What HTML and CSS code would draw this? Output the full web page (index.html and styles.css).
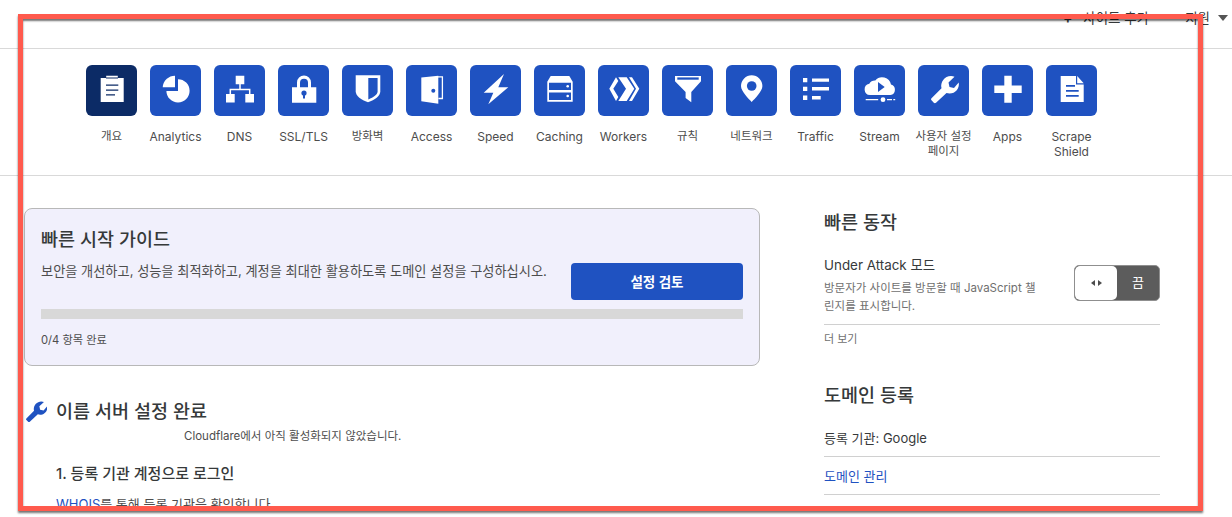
FILE: index.html
```html
<!DOCTYPE html>
<html lang="ko">
<head>
  <meta charset="UTF-8">
  <meta name="viewport" content="width=device-width, initial-scale=1.0">
  <title>Cloudflare 개요</title>
  <link rel="stylesheet" href="styles.css">
</head>

<body>
  <header class="topbar">
    <span class="add-site"><b>+</b> 사이트 추가</span>
    <span class="support">지원 <i class="caret"></i></span>
  </header>

  <nav class="apps">
    <a class="app active">
      <span class="tile"><svg viewBox="0 0 51 51"><path class="w" d="M14.700 13h5.500v-2.300h11.600V13h5.900v24h-23z"/><path class="b" d="M20 12.600h12v1H20zM20 19.400h12.300v1.400H20zM20 24.400h12.300v1.400H20zM20 29.200h9v1.400h-9z"/></svg></span>
      <span class="label ko">개요</span>
    </a>
    <a class="app">
      <span class="tile"><svg viewBox="0 0 51 51"><path class="w" d="M12.700 22.300A12.300 12.300 0 0 1 25 10.700v11.600z"/><path class="w" d="M28 14.200a11.600 11.600 0 1 1-11.600 11.700H28z"/></svg></span>
      <span class="label">Analytics</span>
    </a>
    <a class="app">
      <span class="tile"><svg viewBox="0 0 51 51"><path class="w" d="M21.700 10.700h8.600v8.600h-8.600zM12 29h8.700v8.400H12zM31.300 29H40v8.400h-8.700z"/><path class="s" d="M26 19v5.500M16.300 29v-4.500h19.400V29"/></svg></span>
      <span class="label">DNS</span>
    </a>
    <a class="app">
      <span class="tile"><svg viewBox="0 0 51 51"><path class="w" d="M14 22.300h5v-4.800a7 7 0 0 1 14 0v4.800h5.300v15.400H14zM22 22.300h8v-4.600a4 4 0 0 0-8 0z"/><circle class="b" cx="26" cy="28" r="2.600"/><path class="b" d="M25 29h2v4.500h-2z"/></svg></span>
      <span class="label">SSL/TLS</span>
    </a>
    <a class="app">
      <span class="tile"><svg viewBox="0 0 51 51"><path class="w" d="M13.700 10.300h24.600v16c0 5-5.500 8.500-12.300 10.900-6.800-2.400-12.300-5.900-12.300-10.900z"/><path class="b" d="M26.300 13h9.300v13.300c0 3.400-4 6-9.300 8.100z"/></svg></span>
      <span class="label ko">방화벽</span>
    </a>
    <a class="app">
      <span class="tile"><svg viewBox="0 0 51 51"><path class="w" d="M15.300 12.400l17-1.700v28l-17-2.500z"/><path class="f" d="M32 11.800h4.400v21.700h-4"/><circle class="b" cx="27.300" cy="25.700" r="2"/></svg></span>
      <span class="label">Access</span>
    </a>
    <a class="app">
      <span class="tile"><svg viewBox="0 0 51 51"><path class="w" d="M34 9l-5.700 13.300h10L18.300 39.300l5-11.600h-9.600z"/></svg></span>
      <span class="label">Speed</span>
    </a>
    <a class="app">
      <span class="tile"><svg viewBox="0 0 51 51"><path class="w" d="M16.700 11h18.600l3.400 5.700v20H13.300v-20z"/><path class="b" d="M15 17.700h22V25H15zM15 27.600h22V35H15z"/><circle class="w" cx="33.700" cy="21.300" r="1.300"/><circle class="w" cx="33.700" cy="31" r="1.300"/></svg></span>
      <span class="label">Caching</span>
    </a>
    <a class="app">
      <span class="tile"><svg viewBox="0 0 51 51"><path class="w" d="M11.300 23.700L18 12.300l2.300 3.700-5 7.700 5 8.300-2.300 4zM20.300 12.300h8.400l7.600 11.400-7.600 12.300h-8.400l7.700-12.300zM31 12.300h3l7.300 11.400L34 36h-3l7-12.300z"/></svg></span>
      <span class="label">Workers</span>
    </a>
    <a class="app">
      <span class="tile"><svg viewBox="0 0 51 51"><path class="w" d="M13 11h26v5.300L29.300 27v10.300l-5.700-4.300v-6L13 16.300z"/><path class="b" d="M15.300 12.400h21.400v2.300H15.300z"/></svg></span>
      <span class="label ko">규칙</span>
    </a>
    <a class="app">
      <span class="tile"><svg viewBox="0 0 51 51"><path class="w" d="M25.700 37c-3-3.300-10.700-10.500-10.700-16a10.700 10.700 0 0 1 21.400 0c0 5.500-7.700 12.700-10.700 16z"/><circle class="b" cx="25.700" cy="21" r="4.800"/></svg></span>
      <span class="label ko">네트워크</span>
    </a>
    <a class="app">
      <span class="tile"><svg viewBox="0 0 51 51"><path class="w" d="M13 13h4.300v4.300H13zM13 21.700h4.300V26H13zM13 30.600h4.300v4.300H13zM22 13.400h17v3.400H22zM22 22h17v3.400H22zM22 31h8.700v3.400H22z"/></svg></span>
      <span class="label">Traffic</span>
    </a>
    <a class="app">
      <span class="tile"><svg viewBox="0 0 51 51"><path class="w" d="M16 30a5.700 5.700 0 0 1-.7-11.300 6.500 6.500 0 0 1 6-3.200A9 9 0 0 1 37 19.500 5.400 5.400 0 0 1 36.500 30z"/><path class="b" d="M24 17l6.700 5L24 27z"/><path class="w" d="M11.700 34h12.500v1.200H11.700zM33 34h5v1.200h-5zM39.300 34h1.900v1.200h-1.900z"/><circle class="w" cx="29" cy="34.700" r="2.400"/></svg></span>
      <span class="label">Stream</span>
    </a>
    <a class="app">
      <span class="tile"><svg viewBox="0 0 51 51"><path class="w" d="M13.500 33.300l10-10c-1.500-5.800 3-12.300 9.500-12.300 1.300 0 2.500.3 3.500.7l-6 5.800 1 4.500 4.500 1 4.700-5.600c1.200 5.600-3.200 11.100-9.200 11.100-1 0-2-.2-3-.5L18 37.700c-.8.6-1.500.6-2.200 0l-2.300-2.400c-.6-.7-.6-1.300 0-2z"/></svg></span>
      <span class="label ko">사용자 설정 페이지</span>
    </a>
    <a class="app">
      <span class="tile"><svg viewBox="0 0 51 51"><path class="w" d="M22.300 10.700h7.400v9.800h10v7.400h-10v9.800h-7.400v-9.800h-10v-7.400h10z"/></svg></span>
      <span class="label">Apps</span>
    </a>
    <a class="app">
      <span class="tile"><svg viewBox="0 0 51 51"><path class="w" d="M14.700 11H30v8.500h7.700V37h-23zM31.200 11l6.500 7.200h-6.500z"/><path class="b" d="M20 20h9v1.800h-9zM20 25h12.700v1.800H20zM20 30h12.700v1.800H20z"/></svg></span>
      <span class="label">Scrape Shield</span>
    </a>
  </nav>

  <main class="content">
    <section class="left">
      <div class="guide">
        <div class="guide-top">
          <div class="guide-text">
            <h2>빠른 시작 가이드</h2>
            <p>보안을 개선하고, 성능을 최적화하고, 계정을 최대한 활용하도록 도메인 설정을 구성하십시오.</p>
          </div>
          <button class="review-btn">설정 검토</button>
        </div>
        <div class="progress"></div>
        <p class="progress-text">0/4 항목 완료</p>
      </div>

      <div class="ns">
        <h2 class="ns-title">
          <svg class="ns-icon" viewBox="13 10.500 27.500 27.500"><path d="M13.500 33.300l10-10c-1.500-5.800 3-12.300 9.500-12.300 1.300 0 2.500.3 3.500.7l-6 5.800 1 4.500 4.500 1 4.700-5.600c1.200 5.600-3.200 11.100-9.200 11.100-1 0-2-.2-3-.5L18 37.700c-.8.6-1.500.6-2.200 0l-2.300-2.400c-.6-.7-.6-1.300 0-2z"/></svg>
          이름 서버 설정 완료
        </h2>
        <p class="ns-note">Cloudflare에서 아직 활성화되지 않았습니다.</p>
        <h3>1. 등록 기관 계정으로 로그인</h3>
        <p class="ns-step"><a>WHOIS</a>를 통해 등록 기관을 확인합니다.</p>
      </div>
    </section>

    <aside class="right">
      <h2>빠른 동작</h2>
      <div class="attack">
        <div class="attack-text">
          <h4>Under Attack 모드</h4>
          <p>방문자가 사이트를 방문할 때 JavaScript 챌린지를 표시합니다.</p>
        </div>
        <div class="toggle">
          <span class="knob"><i class="arrow-l"></i><i class="arrow-r"></i></span>
          <span class="off">끔</span>
        </div>
      </div>
      <a class="more">더 보기</a>

      <h2 class="domain-title">도메인 등록</h2>
      <div class="domain-row first">등록 기관: Google</div>
      <div class="domain-row"><a>도메인 관리</a></div>
    </aside>
  </main>

  <div class="highlight"></div>
</body>
</html>
```

FILE: styles.css
```css
* {
  margin: 0;
  padding: 0;
  box-sizing: border-box;
}

body {
  height: 517px;
  overflow: hidden;
  position: relative;
  background: #fff;
  color: #36393a;
  font-family: Inter, "Noto Sans CJK KR", sans-serif;
}

a {
  color: #1f52c1;
}

.topbar {
  height: 49px;
  padding: 9px 4px 0 0;
  display: flex;
  justify-content: flex-end;
  gap: 36px;
  font-size: 13.5px;
  line-height: 18px;
  color: #36393a;
  border-bottom: 1px solid #d9d9d9;
}

.add-site b {
  font-weight: 700;
  margin-right: 7px;
}

.support {
  display: flex;
  align-items: flex-start;
  gap: 8px;
}

.caret {
  margin-top: 6px;
  border-left: 5.5px solid transparent;
  border-right: 5.5px solid transparent;
  border-top: 6px solid #555;
}

.apps {
  display: flex;
  padding: 16px 0 16px 79.5px;
  border-bottom: 1px solid #d9d9d9;
}

.app {
  width: 64px;
  display: flex;
  flex-direction: column;
  align-items: center;
  color: #4d4d4d;
}

.tile {
  width: 51px;
  height: 51px;
  border-radius: 6px;
  background: #1f52c1;
  color: #1f52c1;
}

.app.active .tile {
  background: #0c2b66;
  color: #0c2b66;
}

.tile svg {
  display: block;
  width: 51px;
  height: 51px;
}

.w {
  fill: #fff;
  fill-rule: evenodd;
}

.b {
  fill: currentColor;
}

.s {
  fill: none;
  stroke: #fff;
  stroke-width: 1.5;
}

.f {
  fill: none;
  stroke: #fff;
  stroke-width: 1.3;
}

.label {
  margin-top: 13px;
  width: 60px;
  text-align: center;
  font-size: 12px;
  line-height: 15px;
}

.label.ko {
  font-size: 11.5px;
}

.content {
  display: flex;
  gap: 64px;
  padding: 32px 0 0 24px;
}

.left {
  width: 736px;
}

.guide {
  height: 158px;
  padding: 17px 16px;
  background: #f1f0fc;
  border: 1px solid #b8b8b8;
  border-radius: 8px;
}

.guide-top {
  display: flex;
  justify-content: space-between;
  align-items: flex-end;
  height: 74px;
}

.guide-text {
  align-self: flex-start;
}

.guide h2 {
  font-size: 18.5px;
  line-height: 27px;
  font-weight: 500;
}

.guide-text p {
  margin-top: 9px;
  font-size: 13.2px;
  line-height: 18px;
  color: #4d4d4d;
}

.review-btn {
  width: 172px;
  height: 37px;
  padding-bottom: 2px;
  border: none;
  border-radius: 4px;
  background: #1f52c1;
  color: #fff;
  font-family: inherit;
  font-size: 13.5px;
  font-weight: 600;
}

.progress {
  height: 10px;
  margin-top: 9px;
  background: #d8d8d8;
}

.progress-text {
  margin-top: 12px;
  font-size: 11.2px;
  line-height: 18px;
  color: #4d4d4d;
}

.ns {
  margin-top: 32px;
}

.ns-title {
  display: flex;
  align-items: center;
  gap: 9px;
  padding-left: 2px;
  font-size: 18.5px;
  line-height: 27px;
  font-weight: 500;
}

.ns-icon {
  width: 21px;
  height: 21px;
  fill: #1f52c1;
}

.ns-note {
  margin-top: 2px;
  padding-left: 160px;
  font-size: 11.5px;
  line-height: 18px;
  color: #4d4d4d;
}

.ns h3 {
  margin-top: 18px;
  padding-left: 32px;
  font-size: 15px;
  line-height: 22px;
  font-weight: 500;
}

.ns-step {
  margin-top: 9px;
  padding-left: 32px;
  font-size: 13px;
  line-height: 20px;
  color: #4d4d4d;
}

.right {
  width: 336px;
}

.right h2 {
  margin-top: 1px;
  font-size: 18.5px;
  line-height: 27px;
  font-weight: 500;
}

.attack {
  margin-top: 19px;
  padding-bottom: 9px;
  display: flex;
  justify-content: space-between;
  border-bottom: 1px solid #d0d0d0;
}

.attack h4 {
  font-size: 13.4px;
  line-height: 20px;
  font-weight: 400;
}

.attack p {
  margin-top: 4px;
  width: 220px;
  font-size: 11.5px;
  line-height: 18px;
  color: #6f6f6f;
  word-break: break-all;
}

.toggle {
  width: 86px;
  height: 36px;
  margin-top: 10px;
  display: flex;
  border: 1px solid #8f8f8f;
  border-radius: 5px;
  background: #5c5c5c;
  overflow: hidden;
}

.knob {
  width: 42px;
  display: flex;
  align-items: center;
  justify-content: center;
  gap: 3px;
  background: #fff;
  border-radius: 5px;
}

.arrow-l {
  border-top: 3.5px solid transparent;
  border-bottom: 3.5px solid transparent;
  border-right: 4px solid #4d4d4d;
}

.arrow-r {
  border-top: 3.5px solid transparent;
  border-bottom: 3.5px solid transparent;
  border-left: 4px solid #4d4d4d;
}

.off {
  flex: 1;
  text-align: center;
  color: #fff;
  font-size: 13px;
  line-height: 33px;
}

.more {
  display: block;
  margin-top: 5px;
  font-size: 11px;
  line-height: 18px;
  color: #6f6f6f;
}

.right .domain-title {
  margin-top: 34px;
}

.domain-row {
  padding: 9px 0 8px;
  font-size: 13px;
  line-height: 20px;
  border-bottom: 1px solid #d0d0d0;
}

.domain-row.first {
  margin-top: 10px;
}

.highlight {
  position: absolute;
  left: 18px;
  top: 14px;
  width: 1185px;
  height: 497px;
  border: 5px solid #ff5a4d;
  box-shadow: 0 2px 2px rgba(0, 0, 0, 0.55), inset 0 2px 2px rgba(0, 0, 0, 0.55);
  pointer-events: none;
}
```
